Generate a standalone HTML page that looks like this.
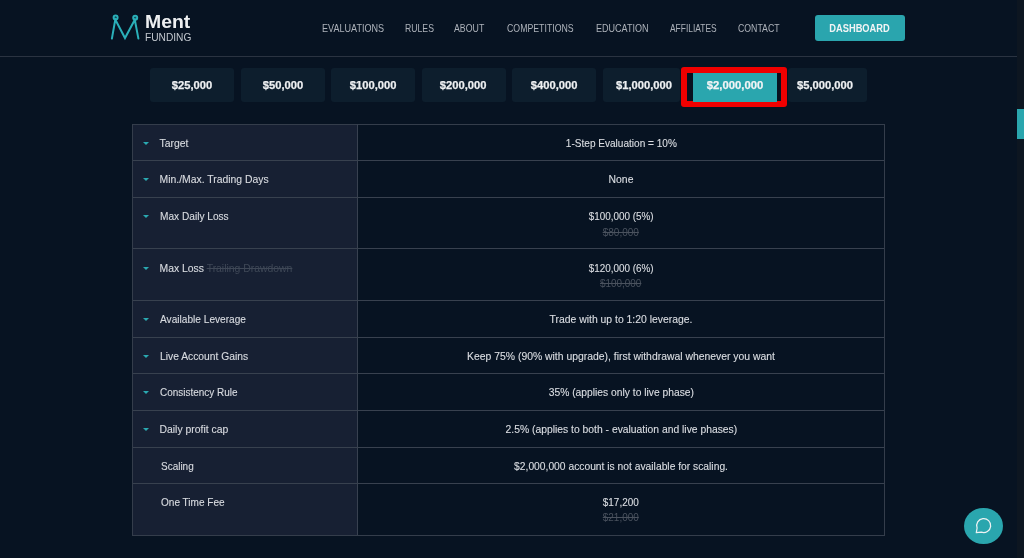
<!DOCTYPE html>
<html><head><meta charset="utf-8">
<style>
html,body{margin:0;padding:0;}
body{width:1024px;height:558px;overflow:hidden;background:#071322;font-family:"Liberation Sans",sans-serif;position:relative;}
.abs{position:absolute;}
.hdrline{left:0;top:55.5px;width:1017px;height:1px;background:#2a3341;}
.nav{top:22px;font-size:10.4px;transform-origin:0 0;color:#adb2ba;white-space:nowrap;line-height:14px;}
.dash{left:815px;top:14.5px;width:89.5px;height:26.5px;background:#2aa5ae;border-radius:3px;color:#f2f4f5;font-weight:bold;font-size:10px;text-align:center;line-height:28.5px;}
.logo-t1{left:144.5px;top:12px;font-size:18.5px;transform-origin:0 0;transform:scaleX(1.05);font-weight:bold;color:#eef0f2;line-height:20px;}
.logo-t2{left:145px;top:30.5px;font-size:10.2px;color:#c3c8cf;line-height:13px;}
.btn{top:67.7px;height:34.6px;width:84px;background:#0d1e2d;border-radius:3px;color:#eef0f2;font-weight:bold;font-size:11.6px;text-align:center;line-height:34px;}
.sel{left:681px;top:66.5px;width:94px;height:28.5px;border:6px solid #f00000;border-radius:3px;background:#081220;}
.selbtn{left:692.5px;top:72.5px;width:84.5px;height:29.5px;background:#2aa6ae;color:#f2f4f5;font-weight:bold;font-size:11.6px;text-align:center;line-height:24.5px;}
.scroll-track{left:1017px;top:0;width:7px;height:558px;background:#0d1621;}
.scroll-thumb{left:1017px;top:109px;width:7px;height:30px;background:#2aa6ae;}
.tbl{left:132px;top:123.5px;width:751px;height:410.5px;border:1px solid #343d4b;}
.lcol{left:133px;top:124.5px;width:225px;height:410px;background:#172033;}
.vdiv{left:357.3px;top:124px;width:1.2px;height:411px;background:#384150;}
.hl{left:133px;width:751px;height:1px;background:#38414f;}
.lbl{left:159.5px;font-size:10.4px;color:#d8dbe0;white-space:nowrap;line-height:14px;}
.tri{left:143.3px;width:0;height:0;border-left:3.1px solid transparent;border-right:3.1px solid transparent;border-top:3.8px solid #2aa9b1;}
.val{left:358px;width:526px;text-align:center;font-size:10.4px;color:#dadde2;white-space:nowrap;line-height:14px;}
.strike{left:358px;width:526px;text-align:center;font-size:10.4px;color:#4a525e;white-space:nowrap;line-height:14px;text-decoration:line-through;}
.lbl,.val{-webkit-text-stroke:0.12px currentColor;}
.btn,.selbtn{-webkit-text-stroke:0.25px currentColor;}
.sxl{display:inline-block;transform-origin:0 50%;}
.sxc{display:inline-block;transform-origin:50% 50%;}
.strike .sxc{text-decoration:line-through;}
.chat{left:964px;top:507.7px;width:39px;height:36.5px;border-radius:50%;background:#2aa6ae;}
</style></head><body>
<div id="root" style="position:absolute;left:0;top:0;width:1024px;height:558px;will-change:transform;">
<!-- header -->
<svg class="abs" style="left:105px;top:10px" width="40" height="35" viewBox="105 10 40 35">
  <g fill="none" stroke="#2ab0b9" stroke-width="2" stroke-linecap="round">
    <circle cx="115.6" cy="17.6" r="2"/>
    <circle cx="135.2" cy="17.8" r="2"/>
    <path d="M111.9 38.6 L115.3 19.6 L125 38 L134.8 19.8 L138.4 38.6"/>
  </g>
</svg>
<div class="abs logo-t1">Ment</div>
<div class="abs logo-t2">FUNDING</div>

<div class="abs nav" style="left:322.1px;transform:scaleX(0.872)">EVALUATIONS</div>
<div class="abs nav" style="left:405.0px;transform:scaleX(0.835)">RULES</div>
<div class="abs nav" style="left:454.2px;transform:scaleX(0.846)">ABOUT</div>
<div class="abs nav" style="left:507.0px;transform:scaleX(0.843)">COMPETITIONS</div>
<div class="abs nav" style="left:595.9px;transform:scaleX(0.870)">EDUCATION</div>
<div class="abs nav" style="left:669.6px;transform:scaleX(0.810)">AFFILIATES</div>
<div class="abs nav" style="left:738.2px;transform:scaleX(0.840)">CONTACT</div>
<div class="abs dash"><span style="display:inline-block;transform:scaleX(0.93)">DASHBOARD</span></div>
<div class="abs hdrline"></div>

<!-- buttons -->
<div class="abs btn" style="left:150px"><span class="sxc" style="transform:scaleX(0.965)">$25,000</span></div>
<div class="abs btn" style="left:240.5px"><span class="sxc" style="transform:scaleX(0.965)">$50,000</span></div>
<div class="abs btn" style="left:331px"><span class="sxc" style="transform:scaleX(0.965)">$100,000</span></div>
<div class="abs btn" style="left:421.5px"><span class="sxc" style="transform:scaleX(0.965)">$200,000</span></div>
<div class="abs btn" style="left:512px"><span class="sxc" style="transform:scaleX(0.965)">$400,000</span></div>
<div class="abs btn" style="left:602.7px;width:77.6px"><span class="sxc" style="transform:scaleX(0.965);position:relative;left:3px">$1,000,000</span></div>
<div class="abs sel"></div>
<div class="abs selbtn"><span class="sxc" style="transform:scaleX(0.975)">$2,000,000</span></div>
<div class="abs btn" style="left:787.5px;width:79.7px"><span class="sxc" style="transform:scaleX(0.965);position:relative;left:-2px">$5,000,000</span></div>

<!-- table -->
<div class="abs tbl"></div>
<div class="abs lcol"></div>
<div class="abs vdiv"></div>
<div class="abs hl" style="top:160px"></div>
<div class="abs hl" style="top:196.5px"></div>
<div class="abs hl" style="top:248px"></div>
<div class="abs hl" style="top:300px"></div>
<div class="abs hl" style="top:336.5px"></div>
<div class="abs hl" style="top:373px"></div>
<div class="abs hl" style="top:409.5px"></div>
<div class="abs hl" style="top:447px"></div>
<div class="abs hl" style="top:482.5px"></div>

<div class="abs tri" style="top:141.5px"></div>
<div class="abs lbl" style="top:136.5px"><span class="sxl" style="transform:scaleX(1.000)">Target</span></div>
<div class="abs val" style="top:136.5px"><span class="sxc" style="transform:scaleX(0.968)">1-Step Evaluation = 10%</span></div>

<div class="abs tri" style="top:178.0px"></div>
<div class="abs lbl" style="top:173.3px"><span class="sxl" style="transform:scaleX(1.000)">Min./Max. Trading Days</span></div>
<div class="abs val" style="top:173.3px"><span class="sxc" style="transform:scaleX(1.000)">None</span></div>

<div class="abs tri" style="top:214.5px"></div>
<div class="abs lbl" style="top:210.0px"><span class="sxl" style="transform:scaleX(0.975)">Max Daily Loss</span></div>
<div class="abs val" style="top:210.0px"><span class="sxc" style="transform:scaleX(0.952)">$100,000 (5%)</span></div>
<div class="abs strike" style="top:225.5px"><span class="sxc" style="transform:scaleX(0.966)">$80,000</span></div>

<div class="abs tri" style="top:266.5px"></div>
<div class="abs lbl" style="top:261.8px"><span class="sxl" style="transform:scaleX(1.000)">Max Loss <span style="color:#3f4857;text-decoration:line-through;-webkit-text-stroke:0">Trailing Drawdown</span></span></div>
<div class="abs val" style="top:261.8px"><span class="sxc" style="transform:scaleX(0.952)">$120,000 (6%)</span></div>
<div class="abs strike" style="top:277.3px"><span class="sxc" style="transform:scaleX(0.955)">$100,000</span></div>

<div class="abs tri" style="top:318.0px"></div>
<div class="abs lbl" style="top:313.2px"><span class="sxl" style="transform:scaleX(0.975)">Available Leverage</span></div>
<div class="abs val" style="top:313.2px"><span class="sxc" style="transform:scaleX(1.000)">Trade with up to 1:20 leverage.</span></div>

<div class="abs tri" style="top:354.5px"></div>
<div class="abs lbl" style="top:349.8px"><span class="sxl" style="transform:scaleX(0.990)">Live Account Gains</span></div>
<div class="abs val" style="top:349.8px"><span class="sxc" style="transform:scaleX(1.000)">Keep 75% (90% with upgrade), first withdrawal whenever you want</span></div>

<div class="abs tri" style="top:391.0px"></div>
<div class="abs lbl" style="top:386.4px"><span class="sxl" style="transform:scaleX(0.958)">Consistency Rule</span></div>
<div class="abs val" style="top:386.4px"><span class="sxc" style="transform:scaleX(0.990)">35% (applies only to live phase)</span></div>

<div class="abs tri" style="top:427.5px"></div>
<div class="abs lbl" style="top:422.8px"><span class="sxl" style="transform:scaleX(1.000)">Daily profit cap</span></div>
<div class="abs val" style="top:422.8px"><span class="sxc" style="transform:scaleX(0.995)">2.5% (applies to both - evaluation and live phases)</span></div>

<div class="abs lbl" style="top:459.8px;left:161px"><span class="sxl" style="transform:scaleX(0.960)">Scaling</span></div>
<div class="abs val" style="top:459.8px"><span class="sxc" style="transform:scaleX(0.990)">$2,000,000 account is not available for scaling.</span></div>

<div class="abs lbl" style="top:495.8px;left:161px"><span class="sxl" style="transform:scaleX(0.967)">One Time Fee</span></div>
<div class="abs val" style="top:495.8px"><span class="sxc" style="transform:scaleX(0.958)">$17,200</span></div>
<div class="abs strike" style="top:511.3px"><span class="sxc" style="transform:scaleX(0.958)">$21,000</span></div>

<div class="abs scroll-track"></div>
<div class="abs scroll-thumb"></div>

<div class="abs chat"></div>
<svg class="abs" style="left:970px;top:512px" width="28" height="26" viewBox="0 0 28 26">
  <path d="M6.3 20.6 L7.1 16 A7 7 0 1 1 11.3 20.2 Z" fill="none" stroke="#eef2f3" stroke-width="1.25" stroke-linejoin="round"/>
</svg>
</div>
</body></html>
